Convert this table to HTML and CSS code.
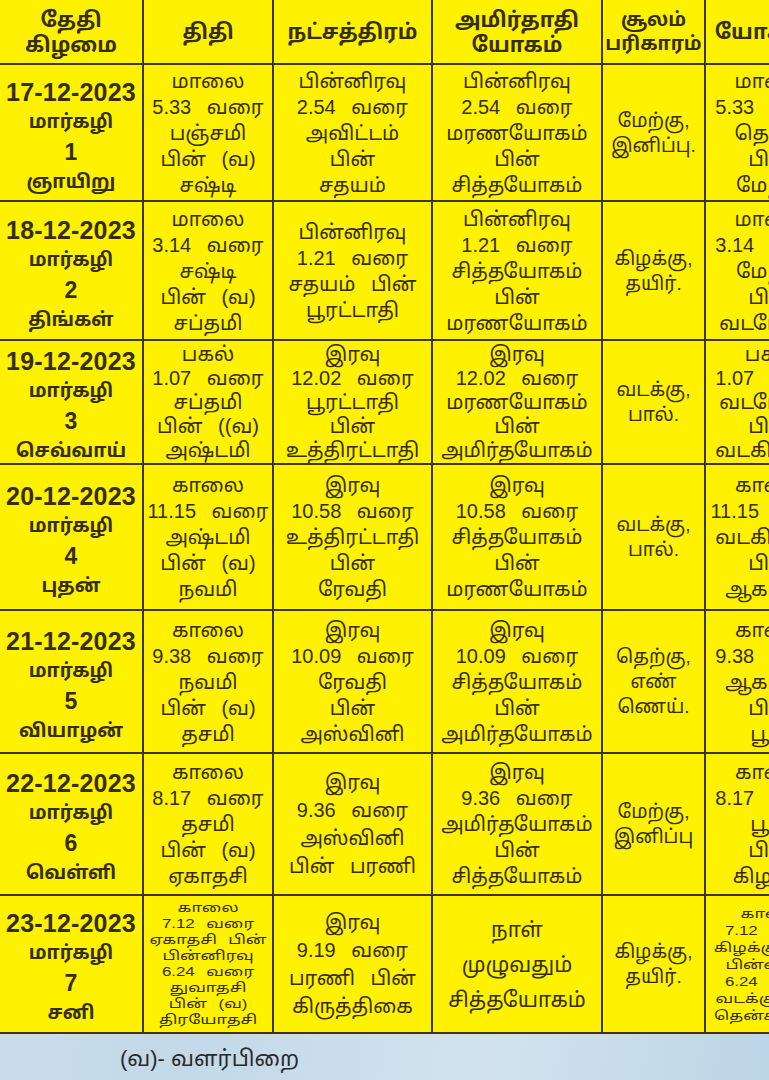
FILE: index.html
```html
<!DOCTYPE html>
<html lang="ta">
<head>
<meta charset="utf-8">
<title>மார்கழி பஞ்சாங்கம்</title>
<link rel="stylesheet" href="styles.css">
</head>
<body>
<div class="sheet">
  <div class="grid">
    <div class="cell head">தேதி<br>கிழமை</div>
    <div class="cell head">திதி</div>
    <div class="cell head">நட்சத்திரம்</div>
    <div class="cell head">அமிர்தாதி<br>யோகம்</div>
    <div class="cell head small">சூலம்<br>பரிகாரம்</div>
    <div class="cell head">யோகினி</div>

    <div class="cell date"><span class="d">17-12-2023</span><span>மார்கழி</span><span class="n">1</span><span>ஞாயிறு</span></div>
    <div class="cell txt">மாலை<br>5.33 வரை<br>பஞ்சமி<br>பின் (வ)<br>சஷ்டி</div>
    <div class="cell txt">பின்னிரவு<br>2.54 வரை<br>அவிட்டம்<br>பின்<br>சதயம்</div>
    <div class="cell txt">பின்னிரவு<br>2.54 வரை<br>மரணயோகம்<br>பின்<br>சித்தயோகம்</div>
    <div class="cell sul">மேற்கு,<br>இனிப்பு.</div>
    <div class="cell txt">மாலை<br>5.33 வரை<br>தெற்கு<br>பின்<br>மேற்கு</div>

    <div class="cell date"><span class="d">18-12-2023</span><span>மார்கழி</span><span class="n">2</span><span>திங்கள்</span></div>
    <div class="cell txt">மாலை<br>3.14 வரை<br>சஷ்டி<br>பின் (வ)<br>சப்தமி</div>
    <div class="cell txt">பின்னிரவு<br>1.21 வரை<br>சதயம் பின்<br>பூரட்டாதி</div>
    <div class="cell txt">பின்னிரவு<br>1.21 வரை<br>சித்தயோகம்<br>பின்<br>மரணயோகம்</div>
    <div class="cell sul">கிழக்கு,<br>தயிர்.</div>
    <div class="cell txt">மாலை<br>3.14 வரை<br>மேற்கு<br>பின்<br>வடமேற்கு</div>

    <div class="cell date"><span class="d">19-12-2023</span><span>மார்கழி</span><span class="n">3</span><span>செவ்வாய்</span></div>
    <div class="cell txt tight">பகல்<br>1.07 வரை<br>சப்தமி<br>பின் ((வ)<br>அஷ்டமி</div>
    <div class="cell txt tight">இரவு<br>12.02 வரை<br>பூரட்டாதி<br>பின்<br>உத்திரட்டாதி</div>
    <div class="cell txt tight">இரவு<br>12.02 வரை<br>மரணயோகம்<br>பின்<br>அமிர்தயோகம்</div>
    <div class="cell sul">வடக்கு,<br>பால்.</div>
    <div class="cell txt tight">பகல்<br>1.07 வரை<br>வடமேற்கு<br>பின்<br>வடகிழக்கு</div>

    <div class="cell date"><span class="d">20-12-2023</span><span>மார்கழி</span><span class="n">4</span><span>புதன்</span></div>
    <div class="cell txt">காலை<br>11.15 வரை<br>அஷ்டமி<br>பின் (வ)<br>நவமி</div>
    <div class="cell txt">இரவு<br>10.58 வரை<br>உத்திரட்டாதி<br>பின்<br>ரேவதி</div>
    <div class="cell txt">இரவு<br>10.58 வரை<br>சித்தயோகம்<br>பின்<br>மரணயோகம்</div>
    <div class="cell sul">வடக்கு,<br>பால்.</div>
    <div class="cell txt">காலை<br>11.15 வரை<br>வடகிழக்கு<br>பின்<br>ஆகாயம்</div>

    <div class="cell date"><span class="d">21-12-2023</span><span>மார்கழி</span><span class="n">5</span><span>வியாழன்</span></div>
    <div class="cell txt">காலை<br>9.38 வரை<br>நவமி<br>பின் (வ)<br>தசமி</div>
    <div class="cell txt">இரவு<br>10.09 வரை<br>ரேவதி<br>பின்<br>அஸ்வினி</div>
    <div class="cell txt">இரவு<br>10.09 வரை<br>சித்தயோகம்<br>பின்<br>அமிர்தயோகம்</div>
    <div class="cell sul">தெற்கு,<br>எண்<br>ணெய்.</div>
    <div class="cell txt">காலை<br>9.38 வரை<br>ஆகாயம்<br>பின்<br>பூமி</div>

    <div class="cell date"><span class="d">22-12-2023</span><span>மார்கழி</span><span class="n">6</span><span>வெள்ளி</span></div>
    <div class="cell txt">காலை<br>8.17 வரை<br>தசமி<br>பின் (வ)<br>ஏகாதசி</div>
    <div class="cell txt loose">இரவு<br>9.36 வரை<br>அஸ்வினி<br>பின் பரணி</div>
    <div class="cell txt">இரவு<br>9.36 வரை<br>அமிர்தயோகம்<br>பின்<br>சித்தயோகம்</div>
    <div class="cell sul">மேற்கு,<br>இனிப்பு</div>
    <div class="cell txt">காலை<br>8.17 வரை<br>பூமி<br>பின்<br>கிழக்கு</div>

    <div class="cell date"><span class="d">23-12-2023</span><span>மார்கழி</span><span class="n">7</span><span>சனி</span></div>
    <div class="cell tiny"><span class="stretch">காலை<br>7.12 வரை<br>ஏகாதசி பின்<br>பின்னிரவு<br>6.24 வரை<br>துவாதசி<br>பின் (வ)<br>திரயோதசி</span></div>
    <div class="cell txt loose">இரவு<br>9.19 வரை<br>பரணி பின்<br>கிருத்திகை</div>
    <div class="cell txt wide">நாள்<br>முழுவதும்<br>சித்தயோகம்</div>
    <div class="cell sul">கிழக்கு,<br>தயிர்.</div>
    <div class="cell tiny t6"><span class="stretch">காலை<br>7.12 வரை<br>கிழக்கு பின்<br>பின்னிரவு<br>6.24 வரை<br>வடக்கு பின்<br>தென்கிழக்கு</span></div>
  </div>
  <p class="note">(வ)- வளர்பிறை</p>
</div>
</body>
</html>
```

FILE: styles.css
```css
html, body {
  margin: 0;
  padding: 0;
}
body {
  width: 769px;
  height: 1080px;
  overflow: hidden;
  background: linear-gradient(100deg, #cddfeb 0%, #c3d9e8 40%, #d2e3ee 70%, #bcd5e6 100%);
  font-family: "Liberation Sans", "Noto Sans Tamil", "Lohit Tamil", "Noto Sans", sans-serif;
  color: #362e00;
}
.sheet {
  width: 850px;
}
.grid {
  display: grid;
  grid-template-columns: 142px 128px 157px 168px 101px 130px;
  grid-template-rows: 63px 135px 137px 122px 144px 141px 140px 136px;
  gap: 2px;
  padding-bottom: 2px;
  background: #3d3600;
}
.cell {
  background: #fff200;
  display: flex;
  flex-direction: column;
  justify-content: center;
  align-items: center;
  text-align: center;
}
.head {
  font-weight: 700;
  font-size: 21px;
  line-height: 25px;
}
.head.small {
  font-size: 19px;
  line-height: 24px;
}
.date {
  font-weight: 700;
  font-size: 19px;
  padding-top: 8px;
}
.date span {
  display: block;
  height: 30px;
  line-height: 30px;
}
.date .d {
  font-size: 25px;
  letter-spacing: 0.2px;
}
.date .n {
  font-size: 23px;
}
.txt {
  font-size: 20px;
  line-height: 26px;
  word-spacing: 0.5em;
}
.txt.tight {
  line-height: 24px;
}
.txt.loose {
  line-height: 28px;
}
.txt.wide {
  font-size: 21px;
  line-height: 35px;
}
.sul {
  font-size: 19px;
  line-height: 25px;
}
.tiny {
  font-size: 13px;
  line-height: 16px;
  word-spacing: 0.4em;
}
.tiny .stretch {
  display: block;
  transform: scaleX(1.3);
}
.t6 {
  line-height: 17px;
}
.note {
  margin: 12px 0 0 120px;
  font-size: 22px;
  color: #2a2a2a;
}
```
